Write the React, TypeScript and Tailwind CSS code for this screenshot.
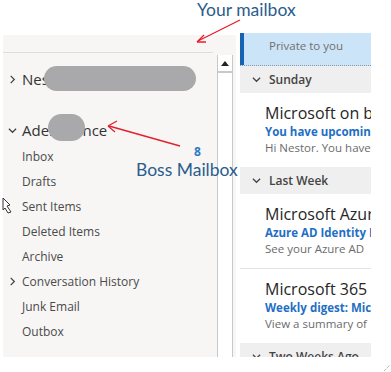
const folders = ["Inbox", "Drafts", "Sent Items", "Deleted Items", "Archive", "Conversation History", "Junk Email", "Outbox"]

const Chevron = ({ down }: { down?: boolean }) => (
    <svg width="9" height="9" viewBox="0 0 10 10" className="shrink-0">
        {down ? (
            <path d="M1 3 L5 7 L9 3" fill="none" stroke="#444" strokeWidth="1.4" />
        ) : (
            <path d="M3 1 L7 5 L3 9" fill="none" stroke="#444" strokeWidth="1.4" />
        )}
    </svg>
)

const GroupHeader = ({ label }: { label: string }) => (
    <div className="flex items-center h-[27px] shrink-0 bg-[#efefef] pl-[12px] gap-[8px] text-[12px] font-semibold text-[#444]">
        <Chevron down />
        <span>{label}</span>
    </div>
)

type MailProps = { title: string; subject: string; preview: string; accent?: string }
const MailItem = ({ title, subject, preview, accent }: MailProps) => (
    <div className="flex h-[74px] shrink-0">
        <div className="w-[4px] bg-[#1763b3] my-[1px]" />
        <div className="flex flex-col pl-[25px] pt-[10px] whitespace-nowrap">
            <span className="text-[16px] leading-[20px] text-[#262626]">
                {title}
                {accent && <span className="text-[#d47b1c]">{accent}</span>}
            </span>
            <span className="text-[11.5px] leading-[17px] font-bold text-[#1f6fc4]">{subject}</span>
            <span className="text-[11.5px] leading-[15px] text-[#6b6b6b]">{preview}</span>
        </div>
    </div>
)

export default function App() {
    return (
        <div className="relative w-[391px] h-[372px] bg-white overflow-hidden font-['Open_Sans',sans-serif]">
            {/* top annotation */}
            <div className="h-[33px] pl-[197px] text-[17.5px] leading-[20px] text-[#2b5d8c] font-['Lato',sans-serif]">Your mailbox</div>

            <div className="flex h-[324px]">
                {/* folder pane */}
                <div className="flex ml-[3px] mt-[2px] w-[233px] bg-[#f7f6f5]">
                    <div className="flex flex-col w-[214px]">
                        <div className="mt-[17px] h-px bg-[#dedddc] mr-[4px]" />
                        {/* mailbox 1 */}
                        <div className="flex items-center h-[28px] mt-[12px] pl-[5px] gap-[5px] text-[15px] text-[#333]">
                            <Chevron />
                            <span className="relative">
                                Nes
                                <span className="absolute left-[22px] top-[-2px] w-[152px] h-[25px] rounded-full bg-[#a9a9ab]" />
                            </span>
                        </div>
                        {/* mailbox 2 */}
                        <div className="flex items-center h-[28px] mt-[23px] pl-[5px] gap-[5px] text-[15px] text-[#333]">
                            <Chevron down />
                            <span className="relative">
                                Adele Vance
                                <span className="absolute left-[26px] top-[-5px] w-[37px] h-[27px] rounded-full bg-[#a9a9ab]" />
                            </span>
                        </div>
                        <div className="flex flex-col">
                            {folders.map((f) => (
                                <div key={f} className="flex items-center h-[25px] pl-[5px] gap-[5px] text-[12px] text-[#4a4a4a]">
                                    {f === "Conversation History" ? <Chevron /> : <span className="w-[9px]" />}
                                    <span>{f}</span>
                                </div>
                            ))}
                        </div>
                    </div>
                    {/* scrollbar */}
                    <div className="flex flex-col w-[16px] mt-[20px] bg-white border-x border-[#c8c8c8]">
                        <div className="flex items-center justify-center h-[18px] border-b-2 border-[#c8c8c8]">
                            <svg width="8" height="6" viewBox="0 0 8 6">
                                <path d="M0 6 L4 1 L8 6 Z" fill="#222" />
                            </svg>
                        </div>
                    </div>
                </div>

                {/* message list */}
                <div className="ml-[4px] w-[131px] overflow-hidden flex flex-col">
                    <div className="flex h-[33px] shrink-0 bg-[#cce4f7] border-b border-dotted border-[#8a9aa8]">
                        <div className="w-[4px] bg-[#1763b3]" />
                        <span className="pl-[25px] pt-[4px] text-[11.5px] text-[#707070] whitespace-nowrap">Private to you</span>
                    </div>
                    <GroupHeader label="Sunday" />
                    <MailItem title="Microsoft on b" subject="You have upcoming" preview="Hi Nestor. You have" />
                    <GroupHeader label="Last Week" />
                    <MailItem title="Microsoft Azur" subject="Azure AD Identity P" preview="See your Azure AD" />
                    <div className="h-px shrink-0 bg-[#e4e4e4]" />
                    <MailItem title="Microsoft 365" accent=" I" subject="Weekly digest: Mic" preview="View a summary of" />
                    <GroupHeader label="Two Weeks Ago" />
                </div>
            </div>

            {/* boss annotation */}
            <span className="absolute left-[194px] top-[144px] text-[12px] leading-[16px] font-bold text-[#2f7bc4]">8</span>
            <span className="absolute left-[136px] top-[160px] text-[17.5px] leading-[20px] text-[#2b5d8c] font-['Lato',sans-serif]">Boss Mailbox</span>

            {/* cursor fragment */}
            <svg className="absolute left-[2px] top-[197px]" width="12" height="18" viewBox="0 0 12 18">
                <path d="M1 1 L8 8 L5 9 L9 15 L6 16 L3 11 L1 13 Z" fill="white" stroke="#333" strokeWidth="1" />
            </svg>

            {/* arrows */}
            <svg className="absolute left-0 top-0 pointer-events-none" width="391" height="372">
                <line x1="240" y1="20" x2="198" y2="41" stroke="#e3202a" strokeWidth="1.3" />
                <path d="M197 42 L204 35 M197 42 L206 42" stroke="#e3202a" strokeWidth="1.3" fill="none" />
                <line x1="180" y1="146" x2="109" y2="126" stroke="#e3202a" strokeWidth="1.3" />
                <path d="M108 126 L117 121 M108 126 L115 132" stroke="#e3202a" strokeWidth="1.3" fill="none" />
                <path d="M384 371 L390 365" stroke="#999" strokeWidth="1" strokeDasharray="1 1" />
            </svg>
        </div>
    )
}
